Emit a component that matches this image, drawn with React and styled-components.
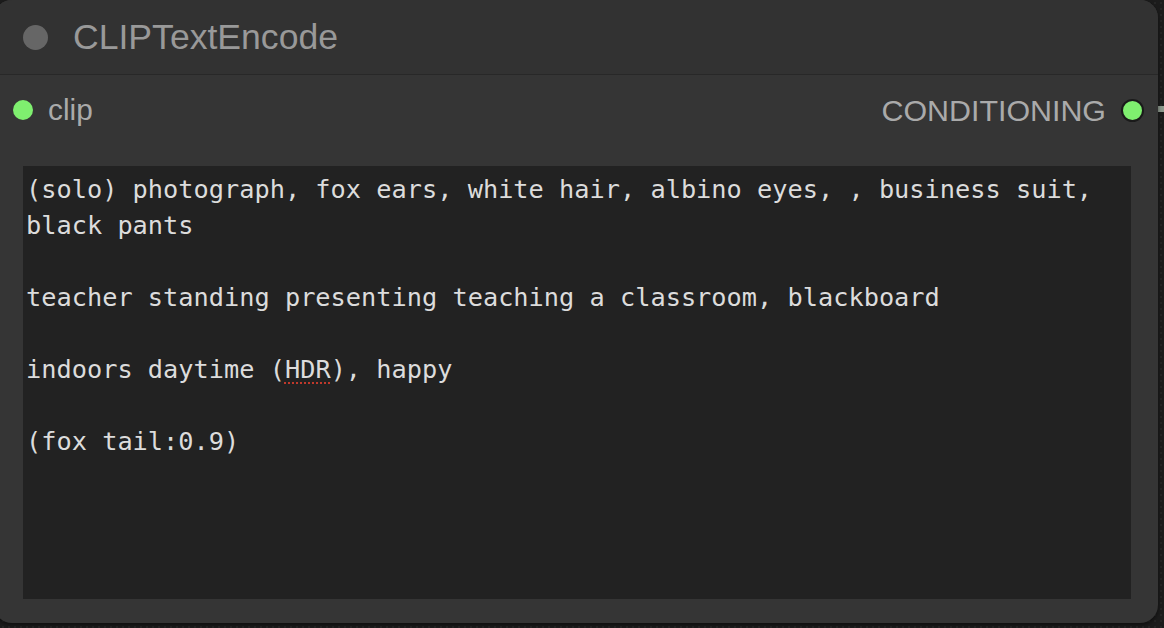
import React from "react";
import styled, { createGlobalStyle } from "styled-components";

const Global = createGlobalStyle`
  html, body { margin: 0; padding: 0; }
  body {
    width: 1164px; height: 628px; overflow: hidden;
    background: #1c1c1c;
    font-family: "Liberation Sans", Arial, sans-serif;
  }
`;

const Canvas = styled.div`
  position: relative;
  width: 1164px;
  height: 628px;
  overflow: hidden;
  background-color: #1c1c1c;
  background-image: radial-gradient(#262626 1px, transparent 1px);
  background-size: 6px 6px;
`;

const Node = styled.div`
  position: absolute;
  left: -6px;
  top: 0;
  width: 1164px;
  height: 623px;
  background: #353535;
  border-radius: 18px;
  display: flex;
  flex-direction: column;
  box-shadow: 0 2px 4px rgba(0,0,0,0.5);
`;

const TitleBar = styled.div`
  height: 75px;
  flex: none;
  display: flex;
  align-items: center;
  background: #323232;
  border-radius: 18px 18px 0 0;
  border-bottom: 1px solid #282828;
  box-sizing: border-box;
  padding-left: 29px;
  gap: 25px;
`;

const Dot = styled.span`
  flex: none;
  width: ${p => p.$size}px;
  height: ${p => p.$size}px;
  border-radius: 50%;
  background: ${p => p.$color};
  box-sizing: border-box;
  border: ${p => (p.$ring ? "2px solid #1a1a1a" : "none")};
`;

const Title = styled.span`
  font-size: 35.6px;
  color: #999;
  line-height: 1;
  margin-top: 1px;
`;

const SlotRow = styled.div`
  height: 70px;
  flex: none;
  display: flex;
  align-items: center;
  justify-content: space-between;
  padding: 0 14px 0 19px;
`;

const Slot = styled.div`
  display: flex;
  align-items: center;
  gap: ${p => p.$gap}px;
`;

const SlotLabel = styled.span`
  font-size: ${p => p.$size || 29.8}px;
  color: #aaa;
  line-height: 1;
`;

const Prompt = styled.div`
  margin: 21px 27px 24px 29px;
  flex: 1;
  background: #222;
  color: #dcdcdc;
  font-family: "DejaVu Sans Mono", monospace;
  font-size: 25.3px;
  line-height: 36px;
  padding: 6px 3px 2px;
  white-space: pre-wrap;
  overflow: hidden;
`;

const Misspelled = styled.span`
  text-decoration: underline dotted #c0392b;
  text-decoration-thickness: 2px;
  text-underline-offset: 4px;
`;

const Link = styled.div`
  position: absolute;
  left: 1158px;
  top: 106px;
  width: 10px;
  height: 6px;
  background: #8e9a8e;
`;

export default function App() {
  return (
    <>
      <Global />
      <Canvas>
        <Link />
        <Node>
          <TitleBar>
            <Dot $size={25} $color="#666" />
            <Title>CLIPTextEncode</Title>
          </TitleBar>
          <SlotRow>
            <Slot $gap={15}>
              <Dot $size={20} $color="#7fef6f" />
              <SlotLabel>clip</SlotLabel>
            </Slot>
            <Slot $gap={15}>
              <SlotLabel $size={30.4}>CONDITIONING</SlotLabel>
              <Dot $size={23} $color="#7fef6f" $ring />
            </Slot>
          </SlotRow>
          <Prompt>
            {"(solo) photograph, fox ears, white hair, albino eyes, , business suit,\nblack pants\n\nteacher standing presenting teaching a classroom, blackboard\n\nindoors daytime ("}
            <Misspelled>HDR</Misspelled>
            {"), happy\n\n(fox tail:0.9)"}
          </Prompt>
        </Node>
      </Canvas>
    </>
  );
}
